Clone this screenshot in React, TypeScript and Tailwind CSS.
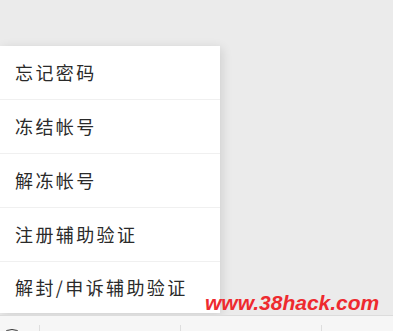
import React from 'react';

const items = ['忘记密码', '冻结帐号', '解冻帐号', '注册辅助验证', '解封/申诉辅助验证'];

export default function App() {
  return (
    <div
      className="relative flex h-[331px] w-[393px] flex-col overflow-hidden bg-[#ebebeb]"
      style={{ fontFamily: '"Noto Sans CJK SC", "Noto Sans", sans-serif' }}
    >
      <div className="h-[46px] shrink-0" />
      {/* popup menu */}
      <div className="w-[220px] shrink-0 bg-white shadow-[2px_2px_10px_rgba(0,0,0,0.12)]">
        {items.map((label, i) => (
          <div
            key={label}
            className={`flex items-center pl-[15px] text-[18px] tracking-[2.4px] text-[#2a2a2a] ${
              i < items.length - 1 ? 'h-[54px] border-b border-[#f0f0f0]' : 'h-[51px]'
            }`}
          >
            {label}
          </div>
        ))}
      </div>
      {/* bottom input bar */}
      <div className="mt-[2px] flex flex-1 border-t border-[#dcdcdc] bg-[#f6f6f6]">
        <div className="relative mt-[9px] w-[40px] border-r border-[#dedede]">
          <div className="absolute left-[-1px] top-[4px] h-[26px] w-[26px] rounded-full border-[1.5px] border-[#333]" />
        </div>
        <div className="mt-[9px] w-[141px] border-r border-[#dedede]" />
        <div className="mt-[9px] w-[141px] border-r border-[#dedede]" />
        <div className="flex-1" />
      </div>
      {/* watermark */}
      <div
        className="absolute left-[205px] top-[292px] text-[21px] font-bold italic leading-none text-[#ee2a2f]"
        style={{ fontFamily: '"Liberation Sans", Arial, sans-serif' }}
      >
        www.38hack.com
      </div>
    </div>
  );
}
